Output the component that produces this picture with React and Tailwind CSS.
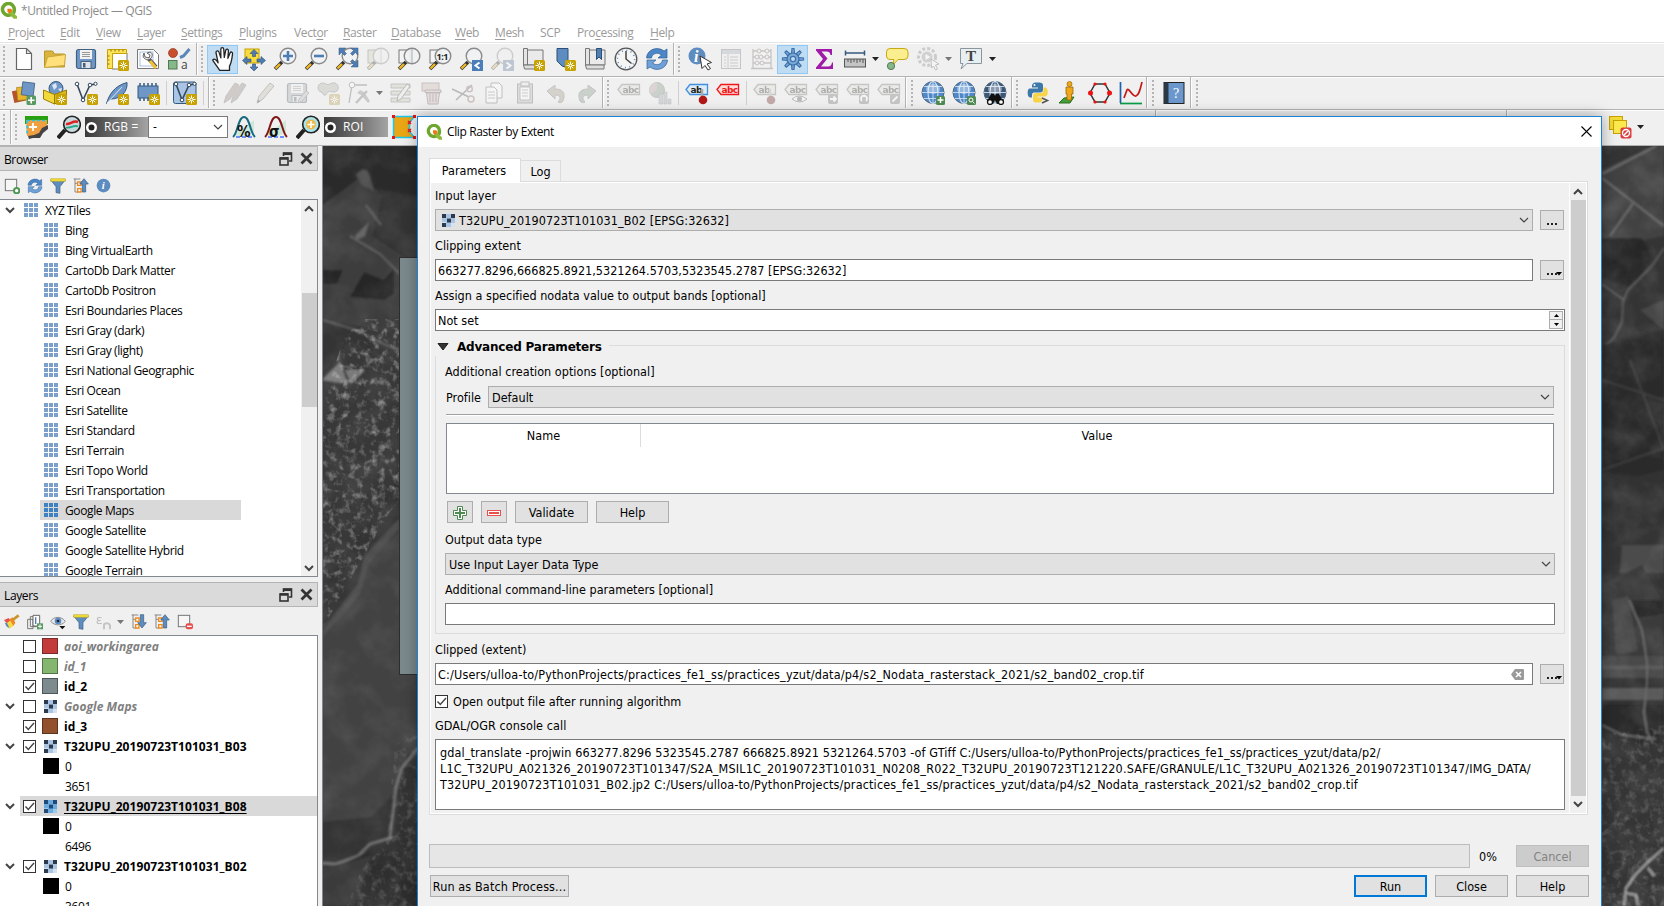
import React from "react";

const UI = "font-['Open_Sans','Noto_Sans',sans-serif] text-[12px] tracking-[-0.38px] [font-stretch:normal]";
const DLG = "font-['DejaVu_Sans_Condensed','DejaVu_Sans',sans-serif] [font-stretch:condensed] text-[12.5px] tracking-[0.02px]";

/* ---------- small building blocks ---------- */
const Svg = ({ s = 24, faded, children, className = "" }) => (
  <svg width={s} height={s} viewBox="0 0 24 24" fill="none" className={`shrink-0 ${faded ? "opacity-35 grayscale-50" : ""} ${className}`}>
    {children}
  </svg>
);
const Cell = ({ children, active }) => (
  <div className={`flex h-[29px] w-[31px] shrink-0 items-center justify-center ${active ? "border border-[#90c8f6] bg-[#c0dcf3]" : ""}`}>{children}</div>
);
const Grip = ({ className = "" }) => (
  <div className={`flex shrink-0 flex-col gap-[2px] ${className}`}>
    {Array.from({ length: 7 }).map((_, i) => (
      <i key={i} className="h-[2px] w-[2px] bg-[#b4b4b4]" />
    ))}
  </div>
);
const Edge = () => <div className="w-[2px] shrink-0 self-stretch border-r border-white bg-[#b2b2b2]" />;
const Sep = ({ className = "" }) => <div className={`h-6 w-px shrink-0 bg-[#cfcfcf] ${className}`} />;
const Drop = ({ dim, className = "" }) => (
  <svg width="11" height="6" viewBox="0 0 11 6" className={`shrink-0 ${className}`}>
    <path d="M2 1h7L5.500 5z" fill={dim ? "#777" : "#222"} />
  </svg>
);

/* ---------- icon parts ---------- */
const Spark = ({ x = 13, y = 13 }) => (
  <g transform={`translate(${x} ${y})`}>
    <rect width="11" height="11" rx="1.500" fill="#c8a200" />
    <path d="M5.500 1.500v8M1.500 5.500h8M2.800 2.800l5.400 5.400M8.200 2.800L2.800 8.200" stroke="#fff" strokeWidth="1" />
    <circle cx="5.500" cy="5.500" r="1.300" fill="#c8a200" stroke="#fff" strokeWidth=".8" />
  </g>
);
const Lens = ({ children, handle = "#f0b820" }) => (
  <>
    <path d="M2 22l7-7" stroke="#333" strokeWidth="3.600" />
    <path d="M2.500 21.500l4.500-4.500" stroke={handle} strokeWidth="2.400" />
    <circle cx="15" cy="9" r="7.800" fill="#f0f2f4" fillOpacity=".9" stroke="#8a8a8a" strokeWidth="1.400" />
    {children}
  </>
);
const QLogo = ({ s = 16 }) => (
  <Svg s={s}>
    <path d="M17.500 17A8.300 8.300 0 1 1 20 12.500" stroke="#6ea62e" strokeWidth="5" transform="translate(0 -.5)" />
    <path d="M20.300 11q0 3-1.500 5" stroke="#6ea62e" strokeWidth="5" />
    <path d="M12 13h4l8 7v3.500h-4.500L12 16z" fill="#8fb93a" />
    <path d="M10.500 9.500h5l2.300 2.800-4.300 4.200-3-3z" fill="#ee7913" />
  </Svg>
);
const PaperNew = () => <Svg><path d="M4.500 1.500h10l5 5v16h-15zM14.500 1.500v5h5" fill="#fff" stroke="#666" strokeWidth="1.200" /></Svg>;
const Folder = () => <Svg><path d="M1.500 20V4h8l2 3h10v13z" fill="#d9b33c" stroke="#b8962a" /><path d="M1.500 20.500L4.500 10l18-2.500-1 11z" fill="#ffe07a" stroke="#c9a63a" /></Svg>;
const Floppy = ({ faded, pen }) => (
  <Svg faded={faded}>
    <rect x="2.500" y="2.500" width="19" height="19" rx="2" fill={faded ? "#aaa" : "#6e97c8"} stroke="#44607f" strokeWidth="1.200" />
    <rect x="6" y="3" width="12" height="9" fill="#f2f2f2" /><path d="M8 5.500h8M8 7.500h8M8 9.500h8" stroke="#999" />
    <rect x="7" y="14.500" width="10" height="7" fill="#e0e4e8" stroke="#44607f" /><rect x="9" y="16" width="2.500" height="4.500" fill="#44607f" />
    {pen && <path d="M13 22l1-4 7-8 3 2-7 8z" fill="#bbb" stroke="#777" />}
  </Svg>
);
const Layout = () => <Svg><path d="M7 3h12l3 3v16H7z" fill="#fff" stroke="#777" /><path d="M2.500 2.500h19v4h-14v15h-5z" fill="#fbe35a" stroke="#c8a200" /><path d="M6 2.500v2M10 2.500v2M14 2.500v2M18 2.500v2M2.500 9h2M2.500 13h2M2.500 17h2" stroke="#8a7000" /><Spark /></Svg>;
const LayoutMgr = () => <Svg><path d="M1.500 2.500h16l5 5v14h-21z" fill="#fff" stroke="#777" /><rect x="4" y="5" width="13" height="14" stroke="#a9bfe0" /><path d="M12 11l8 9" stroke="#555" strokeWidth="4" /><path d="M14 14l6 7" stroke="#f1c232" strokeWidth="3" /><path d="M8 6l1 4 4 1 1-3-3-2 3-1c3 1 3 5 0 7s-6 0-7-3z" fill="#eee" stroke="#666" /></Svg>;
const Style = () => <Svg><circle cx="6" cy="6" r="4.500" fill="#c8502c" stroke="#8f3a20" strokeWidth=".7" /><rect x="1.500" y="13.500" width="8.500" height="8.500" fill="#86b88a" stroke="#4e7a52" /><path d="M13 10.500l3.500-1.500 6-7" stroke="#5b87b8" strokeWidth="3" /><text x="14" y="22" fontSize="12" fill="#444" fontFamily="Open Sans">a</text></Svg>;
const Hand = () => <Svg s={26}><path d="M9 22.500c-2-3-5-7-6.500-9.500 1-1.500 2.800-.8 4 1l1 1.500L5.500 6c0-1.800 2.300-2 2.800-.3L10 11V3c0-2 2.600-2 2.700 0l.5 7.500L14.500 4c.4-1.600 2.600-1.300 2.500.4l-.5 7 2-5c.7-1.500 2.600-.8 2.300.8-.4 3-.8 8-2.800 11.300v4z" fill="#fff" stroke="#222" strokeWidth="1.200" strokeLinejoin="round" /></Svg>;
const PanSel = () => <Svg><rect x="3" y="2" width="14" height="14" fill="#f8dc3c" stroke="#c8a200" /><g fill="#4f7db3" stroke="#2c4f78" strokeWidth=".6"><path d="M12 2.500l4 4h-2.500v3h-3v-3H8zM12 24l-4-4h2.500v-3h3v3H16zM.5 13.500L5 9.500V12h4v3H5v2.500zM23.500 13.500L19 9.500V12h-4v3h4v2.500z" /></g></Svg>;
const ZoomIn = () => <Svg><Lens><path d="M15 4v10M10 9h10" stroke="#4f7db3" strokeWidth="2.600" /></Lens></Svg>;
const ZoomOut = () => <Svg><Lens><path d="M10 9h10" stroke="#4f7db3" strokeWidth="2.600" /></Lens></Svg>;
const ZoomFull = () => <Svg><Lens /><g fill="#4f7db3" stroke="#34597f" strokeWidth=".5"><path d="M4 1h7L8.500 3.500l3 3-2 2-3-3L4 8zM23 1v7l-2.500-2.500-3 3-2-2 3-3L16 1zM23 20h-7l2.500-2.500-3-3 2-2 3 3L23 13z" /></g></Svg>;
const ZoomSel = ({ faded }) => <Svg faded={faded}><rect x="2" y="3" width="11" height="13" fill={faded ? "#d8d4a0" : "#f4f4f4"} stroke="#777" /><Lens><path d="M15 2v14" stroke="#aaa" /></Lens></Svg>;
const ZoomOne = () => <Svg><rect x="2" y="3" width="11" height="13" fill="#f4f4f4" stroke="#777" /><Lens /><text x="8.500" y="12.500" fontSize="9" fontWeight="700" fill="#222" fontFamily="Open Sans" letterSpacing="-.5">1:1</text></Svg>;
const ZoomNav = ({ faded, d }) => <Svg faded={faded}><Lens /><rect x="13" y="13" width="11" height="11" fill="#4a7ebb" /><path d={d} stroke="#fff" strokeWidth="2" /></Svg>;
const Map3 = ({ mark }) => <Svg><path d="M5 3h17v15H5z" fill="#eaeaea" stroke="#777" /><path d="M2.500 1.500h4V18h-4z" fill="#e4e4e4" stroke="#777" /><path d="M2.500 18H21v4H3.500z" fill="#ddd" stroke="#777" />{mark ? <path d="M13.500 1.500h5v11L16 10l-2.500 2.500z" fill="#4f7db3" stroke="#2c4f78" /> : <Spark />}</Svg>;
const Bookmark = () => <Svg><path d="M5 1.500h11V21l-6-2-5-5z" fill="#5d8cc0" stroke="#2c4f78" /><Spark /></Svg>;
const Clock = () => <Svg><circle cx="12" cy="12" r="10.800" fill="#f5f5f5" stroke="#555" strokeWidth="1.300" /><path d="M12 4v8l5.500 4.500" stroke="#444" strokeWidth="1.500" /><circle cx="12" cy="12" r="8.600" stroke="#5d8cc0" strokeDasharray="1 3.500" strokeWidth="1.600" /></Svg>;
const Refresh = ({ s = 24 }) => <Svg s={s}><path d="M1.500 11C2 2 13-1 19 4l3-2v9h-9l3.500-3C12 4.500 7 7 6.500 11z" fill="#4a86c8" stroke="#2f5f95" strokeWidth=".7" /><path d="M22.500 13c-.5 9-11.500 12-17.500 7l-3 2v-9h9l-3.500 3c4.500 3.500 9.500 1 10-3z" fill="#6fa0d8" stroke="#2f5f95" strokeWidth=".7" /></Svg>;
const Identify = () => <Svg><circle cx="9" cy="9" r="8.500" fill="#5d8cc0" /><text x="6" y="14.500" fontSize="16" fontStyle="italic" fontWeight="700" fill="#fff" fontFamily="Liberation Serif">i</text><path d="M12 9l11.500 6.500-4.500 1.500 3.500 4.500-2.500 1.500-3-4.500-3 3z" fill="#fff" stroke="#333" /></Svg>;
const Table = () => <Svg faded><rect x="2.500" y="2.500" width="19" height="19" fill="#eee" stroke="#777" /><path d="M3 5h18" stroke="#9ab0c8" strokeWidth="4" /><path d="M9 7v14M5 10h2M5 13h2M5 16h2M5 19h2M11 10h8M11 13h8M11 16h8M11 19h8" stroke="#888" /></Svg>;
const Abacus = () => <Svg faded><path d="M3 2v20M21 2v20M1 21.500h22M3 4h18M3 10h18M3 16h18" stroke="#777" strokeWidth="1.300" /><g fill="#eee" stroke="#866"><circle cx="9" cy="4" r="2" /><circle cx="17" cy="4" r="2" /><circle cx="7" cy="10" r="2" /><circle cx="11" cy="10" r="2" /><circle cx="17" cy="10" r="2" /><circle cx="7" cy="16" r="2" /><circle cx="12" cy="16" r="2" /></g></Svg>;
const Gear = () => (
  <Svg>
    <g stroke="#3f72aa" strokeWidth="1.200" fill="#7aa9d8">
      {[0, 45, 90, 135, 180, 225, 270, 315].map((a) => <path key={a} transform={`rotate(${a} 12 12)`} d="M10.500 6.500L11 1.500h2l.5 5z" />)}
      <circle cx="12" cy="12" r="6" /><circle cx="12" cy="12" r="2.600" fill="#c0dcf3" />
    </g>
  </Svg>
);
const Sigma = () => <Svg><path d="M4 2h16v6h-1.500c-.5-2.500-1.500-3.500-4-3.500H9.500l6 7-6.500 8h7c2.500 0 3.500-1.500 4-4H21V22H4v-1.500L11 12 4 3.500z" fill="#a01aa8" /></Svg>;
const Ruler = () => <Svg><path d="M2 6h20M2.500 3.500v5M21.500 3.500v5" stroke="#34597f" strokeWidth="1.500" /><rect x="1.500" y="12" width="21" height="8" fill="#c4c4c4" stroke="#555" /><path d="M5 12v3M8 12v4M11 12v3M14 12v4M17 12v3M20 12v4" stroke="#555" /></Svg>;
const Tip = () => <Svg><path d="M5 1.500h14q4 0 4 3.500v4q0 3.500-4 3.500h-6L8 18l1-5.500H5q-3.500 0-3.500-3.500V5Q1.500 1.500 5 1.500z" fill="#faee8e" stroke="#c8a814" /><circle cx="6" cy="19" r="3.600" fill="#86b88a" stroke="#4e7a52" /></Svg>;
const GearRun = () => <Svg faded><circle cx="11" cy="10" r="8.500" stroke="#888" strokeWidth="3" strokeDasharray="3 2" /><circle cx="11" cy="10" r="5.500" fill="#999" /><path d="M9.500 7l5 3-5 3z" fill="#fff" /><path d="M15 12l8 5-3.500 1 2 4-2 1-2-4-2 2z" fill="#fff" stroke="#666" /></Svg>;
const TextT = () => <Svg><path d="M1.500 1.500h21v15H8L2 22l2-5.500H1.500z" fill="#e8eff3" stroke="#8a969c" /><text x="6.800" y="14" fontSize="15.500" fontWeight="700" fill="#444" fontFamily="Liberation Serif">T</text></Svg>;

const Sources = () => <Svg><rect x="1" y="9" width="12" height="12" transform="rotate(-12 7 15)" fill="#b5542a" /><rect x="5" y="6" width="12" height="13" transform="rotate(-5 11 12)" fill="#e9b52c" stroke="#a07a10" strokeWidth=".6" /><rect x="10" y="1.500" width="12" height="13" transform="rotate(7 16 8)" fill="#6e97c8" stroke="#44607f" strokeWidth=".8" /><rect x="14.500" y="14.500" width="9.500" height="9.500" rx="1.500" fill="#5a9a62" /><path d="M19.200 16v6.500M16 19.200h6.500" stroke="#fff" strokeWidth="1.600" /></Svg>;
const Gpkg = () => <Svg><circle cx="13" cy="7.500" r="7" fill="#6e97c8" stroke="#34597f" /><path d="M9 4l4-2 1 4-3 3zM15 8l4-1-1 4z" fill="#dbe7f4" /><path d="M.5 9l11 4.500v9.500L.5 18z" fill="#f3d83a" stroke="#9a7e00" /><path d="M11.500 13.500L23.500 9v8l-12 6z" fill="#dcb81c" stroke="#9a7e00" /><Spark /></Svg>;
const VNew = ({ box }) => <Svg>{box && <rect x=".5" y="1" width="22.500" height="21.500" rx="2" fill="#a9c4e4" stroke="#34597f" />}<path d="M3 3l6 16 7-15 6-1" stroke="#34495e" strokeWidth="1.600" /><g fill="#fff" stroke="#34495e"><circle cx="3" cy="3" r="1.800" /><circle cx="9" cy="19" r="1.800" /><circle cx="16" cy="4" r="1.800" /><circle cx="21.500" cy="2.800" r="1.600" /></g><Spark /></Svg>;
const Feather = () => <Svg><path d="M1.500 22.500C4 14 9 5 22 1.500 23 10 16 18 6 18z" fill="#6e97c8" stroke="#34597f" /><path d="M2 22L17 6" stroke="#dbe7f4" /><Spark /></Svg>;
const Chip = () => <Svg><path d="M4 5V2M8 5V2M12 5V2M16 5V2M20 5V2M4 20v-4M8 20v-4M12 20v-4" stroke="#34597f" strokeWidth="1.500" /><rect x="2" y="5" width="20" height="12" fill="#6e97c8" stroke="#34597f" /><Spark /></Svg>;
const Pencils = () => <Svg faded><path d="M1 22l2-7L12 2l4 2-9 14z" fill="#b08070" stroke="#777" /><path d="M8 22l2-7 9-13 4 2-9 14z" fill="#998877" stroke="#777" /></Svg>;
const Pencil = () => <Svg faded><path d="M3 22l2-7L16 2l4 3L9 18z" fill="#c9c0a8" stroke="#666" /><path d="M3 22l1-3.500 2.500 2z" fill="#333" /></Svg>;
const Blob = () => <Svg faded><path d="M2 7c0-5 5-6 8-4 3 2 5-2 9-1 5 2 4 9-1 9-3 0-4-1-6 0s-1 4-4 3c-2-1-1-3-3-3-2-.5-3-2-3-4z" fill="#b5b5a0" stroke="#777" /><Spark /></Svg>;
const Vertex = () => <Svg faded><path d="M5 4L2 22M5 4h15" stroke="#666" strokeWidth="1.300" /><circle cx="5" cy="4" r="2.800" fill="#fff" stroke="#666" /><path d="M10 12l3-3 4 2 6 9-2 2-7-8z" fill="#888" /><path d="M20 10L9 22" stroke="#777" strokeWidth="2.500" /></Svg>;
const Modify = () => <Svg faded><path d="M2 3h19v4H2zM2 10h19v4H2zM2 17h19v4H2z" fill="#cfc8a8" stroke="#777" /><path d="M8 20l1-5L18 3l3 2-9 13z" fill="#eee" stroke="#555" /></Svg>;
const Trash = () => <Svg faded><rect x="2" y="2" width="17" height="8" fill="#dcb8a8" stroke="#966" /><path d="M5 9h16v2.500H5zM6.500 12h13L18 23H8z" fill="#dcb8b8" stroke="#855" /><path d="M10 13v8M13 13v8M16 13v8" stroke="#855" /></Svg>;
const Cut = () => <Svg faded><path d="M1 8l17 8M5 19L21 4" stroke="#555" strokeWidth="1.600" /><circle cx="20" cy="18" r="3" stroke="#a66" strokeWidth="1.500" /><circle cx="18.500" cy="8" r="2.800" stroke="#a66" strokeWidth="1.500" /></Svg>;
const Copy = () => <Svg faded><path d="M9 2h8l3 3v12H9z" fill="#fff" stroke="#666" /><path d="M4 6h8l3 3v13H4z" fill="#fff" stroke="#666" /><path d="M6 11h7M6 14h7M6 17h7" stroke="#888" /></Svg>;
const Paste = () => <Svg faded><rect x="4.500" y="3" width="15" height="19" fill="#bbb" stroke="#666" /><rect x="8" y="1" width="8" height="4" fill="#eee" stroke="#666" /><path d="M7 6h10v13H7z" fill="#fff" stroke="#777" /><path d="M9 9h6M9 12h6M9 15h6" stroke="#888" /></Svg>;
const Undo = ({ flip }) => <Svg faded className={flip ? "-scale-x-100" : ""}><path d="M3 10l8-6v4c8 0 11 4 8 12-1 2-4 2-5 1 3-3 3-7-3-7v4z" fill={flip ? "#7a9a7a" : "#b09a78"} stroke="#777" /></Svg>;
const Tag = ({ c = "#777", fill = "#e4e2cc", ink, word = "abc", extra, faded }) => (
  <Svg faded={faded}>
    <path d="M1 8.500L5 3.500h17.500v10H5z" fill={fill} stroke={c} strokeWidth="1.300" />
    <text x="5.500" y="11.500" fontSize="9" fontWeight="700" fill={faded ? "#333" : ink || c} fontFamily="DejaVu Sans" letterSpacing="-.6">{word}</text>
    {extra}
  </Svg>
);
const Pin = () => <><path d="M17 8v9" stroke="#aaa" strokeWidth="2.500" /><circle cx="18" cy="19" r="4.300" fill="#b01818" /></>;
const Badge = ({ d }) => <><rect x="13" y="13" width="10" height="10" rx="2" fill="#777" /><path d={d} stroke="#fff" strokeWidth="1.800" /></>;
const Diagram = () => <Svg faded><circle cx="9" cy="9" r="7.500" fill="#7a9a7a" stroke="#777" /><path d="M9 9V1.500A7.500 7.500 0 0 0 2.500 13z" fill="#c99" /><path d="M11 13h4v10h-4zM16 11h3v12h-3zM20 18h3v5h-3z" fill="#9aaabb" stroke="#777" strokeWidth=".6" /></Svg>;
const Globe = ({ extra, dark }) => <Svg><circle cx="12" cy="11.500" r="11" fill={dark ? "#3c5878" : "#4f88c8"} stroke="#56687c" /><ellipse cx="12" cy="11.500" rx="5" ry="11" stroke="#cfe0f2" strokeWidth="1.100" /><path d="M12 .5v22M1 11.500h22M3 5.500h18M3 17.500h18" stroke="#cfe0f2" strokeWidth=".9" /><ellipse cx="12" cy="8" rx="7" ry="5" fill="#fff" fillOpacity=".4" />{extra}</Svg>;
const Python = () => <Svg><path d="M11 1.500c-5 0-5 2-5 5h6v1H3.500C1 7.500 1 16.500 4 16.500h2c0-4 0-5 3-5h5c2 0 3-1 3-3V4c0-2-2-2.500-6-2.500z" fill="#3c78aa" /><path d="M11.500 21.500c5 0 5-2 5-5h-5v-1h8c3 0 3-9 0-9h-2c0 4 0 5.500-3 5.500h-4C8 12 7 13 7 15v3c0 3 1 3.500 4.500 3.500z" fill="#f8d448" /><circle cx="8.500" cy="4" r="1" fill="#fff" /><path d="M16 17l5.500 2.500-5.500 2.500" stroke="#555" strokeWidth="1.500" /></Svg>;
const Pegman = () => <Svg><path d="M2 22l5-5 10-1-4 6z" fill="#46a03a" stroke="#2b6e22" /><circle cx="12.500" cy="3" r="2.500" fill="#f0a818" stroke="#9a6808" strokeWidth=".7" /><path d="M9 6h7v7h-1.500v6H10v-6H9z" fill="#f0a818" stroke="#9a6808" strokeWidth=".8" /></Svg>;
const Hexa = () => <Svg><path d="M2 12l5-9h10l5 9-5 9H7z" stroke="#333" strokeWidth="1.500" /><g fill="#e11"><circle cx="2.500" cy="12" r="2.500" /><circle cx="21.500" cy="12" r="2.500" /><circle cx="7" cy="3" r="1.600" /><circle cx="17" cy="3" r="1.600" /><circle cx="7" cy="21" r="1.600" /><circle cx="17" cy="21" r="1.600" /></g></Svg>;
const Profile = () => <Svg><path d="M1.500 1v21" stroke="#1f5fb0" strokeWidth="1.700" /><path d="M1 22.500h22" stroke="#0a9a46" strokeWidth="1.700" /><path d="M5 17l3-8c2-3 5 7 9 6 3-1 4-6 6-14" stroke="#c41818" strokeWidth="1.700" /></Svg>;
const HelpBook = () => <Svg><rect x="2" y="1.500" width="20" height="21" fill="#6b97cc" stroke="#222" /><rect x="2" y="1.500" width="4.500" height="21" fill="#2b3947" /><text x="11" y="17" fontSize="14" fill="#fff" fontFamily="Liberation Serif">?</text></Svg>;

const ScpClip = () => <Svg><path d="M0 1h23v8H0z" fill="#28a010" /><path d="M1 5h21v6l-5 3-3 5-5 2H2z" fill="#f0a040" /><path d="M23 8v6l-5 4-3 5H8l-4 1-1-3 6-1 5-2 3-5 6-3z" fill="#444" /><path d="M2 5.500h20M2 5.500v15" stroke="#1ec8e8" strokeWidth="1.500" strokeDasharray="3 2" /><path d="M8 8v8M4 12h8" stroke="#fff" strokeWidth="1.800" /></Svg>;
const ScpLens = ({ plus }) => <Svg><path d="M1 23l7-8" stroke="#222" strokeWidth="4" /><circle cx="15" cy="9.500" r="8.300" fill={plus ? "#a8e4ea" : "#c8d8dc"} stroke="#222" strokeWidth="1.600" />{plus ? <><circle cx="15" cy="9.500" r="5" fill="#f0b848" /><path d="M15 6v7M11.500 9.500h7" stroke="#fff" strokeWidth="1.600" /></> : <><path d="M9 9c4 1 7-4 12-2" stroke="#d22" strokeWidth="2.500" /><path d="M9 12.500c4 1 8-3 12-1" stroke="#2a8" strokeWidth="1.800" /></>}</Svg>;
const ScpCurve = ({ c, t }) => <Svg><path d="M2 20l8-6 12-9v12l-10 5z" fill="#cde8d8" /><path d="M4 22h16" stroke="#7090ff" strokeWidth="2" strokeDasharray="4 2" /><path d="M1 22C6 18 6 2 12 2s6 16 11 20" stroke={c} strokeWidth="2" /><text x="5" y="21.500" fontSize="15" fontWeight="700" fill="#111" fontFamily="DejaVu Sans Condensed">{t}</text></Svg>;
const ScpRoi = () => <Svg><path d="M1.500 1.500h21l-5 6v9l5 6h-21z" fill="#eaa614" stroke="#1ec8e8" strokeWidth="1.500" /><path d="M16 6l3 3M19 6l-3 3M16 14l3 3M19 14l-3 3" stroke="#e11" strokeWidth="1.400" /><g fill="#e11"><path d="M0 0h3v3H0zM0 21h3v3H0zM21 0h3v3h-3zM21 21h3v3h-3z" /></g></Svg>;
const Deselect = () => <Svg><rect x="1.500" y="1.500" width="13" height="13" fill="#f2da38" stroke="#c8a200" /><rect x="5.500" y="5.500" width="13" height="13" fill="#fbe94e" stroke="#c8a200" /><rect x="12.500" y="12.500" width="11" height="11" rx="2" fill="#dc3c3c" /><circle cx="18" cy="18" r="3.500" stroke="#fff" strokeWidth="1.400" /><path d="M16 20l4-4" stroke="#fff" strokeWidth="1.400" /></Svg>;

const Grid9 = ({ hot }) => (
  <svg width="14" height="14" viewBox="0 0 14 14" fill={hot ? "#3f82c4" : "#7ba0cc"} className="shrink-0">
    {[0, 5, 10].map((y) => [0, 5, 10].map((x) => <rect key={`${x}-${y}`} x={x} y={y} width="4" height="4" />))}
  </svg>
);
const RasterIcon = ({ hot }) => {
  const a = hot ? "#1f4a78" : "#2c3a50", b = hot ? "#6aaade" : "#aac4e4", c = hot ? "#9cc8ea" : "#d8e2ee";
  return (
    <svg width="13" height="13" viewBox="0 0 13 13" className="shrink-0">
      <rect width="13" height="13" fill={c} />
      <path d="M4 0h5v4H4zM0 4h5v4H0zM9 4h4v5H9zM4 8h5v5H4z" fill={b} />
      <path d="M0 0h4v4H0zM9 0h4v4H9zM5 4.500h4v4H5zM0 9h4v4H0z" fill={a} />
    </svg>
  );
};
const Chev = ({ up, s = 10, w = 2, c = "#444" }) => (
  <svg width={s} height={s} viewBox="0 0 10 10" className={`shrink-0 ${up ? "rotate-180" : ""}`} fill="none"><path d="M1 3l4 4 4-4" stroke={c} strokeWidth={w} /></svg>
);

/* ---------- dock panels ---------- */
const DockTitle = ({ children }) => (
  <div className="flex h-[25px] w-[318px] shrink-0 items-center border border-l-0 border-[#b4b4b4] bg-[#dadada] pl-1 pr-1 text-black">
    <span className="flex-1 pt-[2px]">{children}</span>
    <svg width="14" height="14" viewBox="0 0 14 14" className="mr-[7px]" fill="none"><path d="M4.500 4V1h8v8H10" stroke="#333" strokeWidth="1.600" /><path d="M4 1.800h9" stroke="#333" strokeWidth="2.500" /><rect x="1" y="6" width="8" height="7" stroke="#333" strokeWidth="1.600" /><path d="M1 6.500h8" stroke="#333" strokeWidth="2.500" /></svg>
    <svg width="13" height="13" viewBox="0 0 13 13"><path d="M1.500 1.500l10 10M11.500 1.500l-10 10" stroke="#333" strokeWidth="2.800" /></svg>
  </div>
);
const Funnel = () => <Svg s={16}><path d="M1 3h22l-8 10v10l-6-1v-9z" fill="#5d8cc0" stroke="#44607f" /><path d="M1 1h22v4H1z" fill="#f4dc3c" stroke="#b09a10" strokeWidth=".7" /></Svg>;
const TreeArrow = ({ down }) => <Svg s={16}><path d="M3 1v20h5M3 8h5M1 1.500h10" stroke="#888" strokeWidth="1.500" /><path d="M7 6h5v5H7zM7 16h5v5H7z" fill="#fff" stroke="#f08a1c" strokeWidth="2" /><path d={down ? "M14 1h5v12h4l-6.500 8L10 13h4z" : "M14 21h5V9h4L16.500 1 10 9h4z"} fill="#5d8cc0" stroke="#34597f" /></Svg>;
const SquareDot = ({ red }) => <Svg s={16}><rect x="2" y="2" width="17" height="17" stroke="#777" strokeWidth="1.500" fill="#f6f6f6" />{red ? <><rect x="13" y="14" width="11" height="9" rx="3" fill="#e85050" /><path d="M15 18.500h7" stroke="#fff" strokeWidth="2" /></> : <circle cx="19" cy="19" r="4" fill="#fff" stroke="#4e9a52" strokeWidth="3" />}</Svg>;
const Info = () => <Svg s={15}><circle cx="12" cy="12" r="11" fill="#5d8cc0" /><text x="9" y="18" fontSize="17" fontStyle="italic" fontWeight="700" fill="#fff" fontFamily="Liberation Serif">i</text></Svg>;
const Brush = () => <Svg s={16}><path d="M0 9l7-3 3 4-5 5z" fill="#e85050" /><path d="M2 15l7-5 5 8-6 4z" fill="#f4dc3c" /><path d="M1 13l4 1 3 7-4-2z" fill="#5d8cc0" /><path d="M8 8l6 10 3-5-4-8z" fill="#f08a1c" /><path d="M13 9l9-7" stroke="#c8952c" strokeWidth="4" /></Svg>;
const GroupAdd = () => <Svg s={16}><path d="M1 8h8v14H1zM5 4h9v15H5z" fill="#f4f4f4" stroke="#777" strokeWidth="1.500" /><path d="M9 2h10v16H9z" fill="#fff" stroke="#666" strokeWidth="1.500" /><path d="M13 5v10" stroke="#4f7db3" strokeWidth="2" /><rect x="15" y="14" width="9" height="9" fill="#5a9a62" /><path d="M19.500 15.500v6M16.500 18.500h6" stroke="#fff" strokeWidth="1.500" /></Svg>;
const Eye = () => <Svg s={16}><path d="M1 11C6 3 17 3 23 11c-6 7-16 7-22 0z" fill="#e4eaf0" stroke="#888" strokeWidth="1.400" /><circle cx="12" cy="10.500" r="5" fill="#5d8cc0" /><circle cx="12" cy="10.500" r="2" fill="#222" /><path d="M14 18h9l-4.500 5z" fill="#111" /></Svg>;
const Eps = () => <Svg s={16} faded><text x="0" y="15" fontSize="20" fill="#555" fontFamily="Open Sans">ε</text><path d="M12 23v-6q0-3 4-3t5 3v6" stroke="#777" strokeWidth="3" /></Svg>;

const tiles = ["Bing", "Bing VirtualEarth", "CartoDb Dark Matter", "CartoDb Positron", "Esri Boundaries Places", "Esri Gray (dark)", "Esri Gray (light)", "Esri National Geographic", "Esri Ocean", "Esri Satellite", "Esri Standard", "Esri Terrain", "Esri Topo World", "Esri Transportation", "Google Maps", "Google Satellite", "Google Satellite Hybrid", "Google Terrain"];

const Box = ({ on }) => (
  <div className="flex h-[13px] w-[13px] shrink-0 items-center justify-center border border-[#333] bg-white">
    {on && <svg width="11" height="11" viewBox="0 0 11 11" fill="none"><path d="M1.500 5.500l2.800 3L10 2" stroke="#444" strokeWidth="1.400" /></svg>}
  </div>
);
const layers = [
  { n: "aoi_workingarea", c: "bg-[#c43c39] border-[#7a2a28]" },
  { n: "id_1", c: "bg-[#85b66f] border-[#557546]" },
  { n: "id_2", c: "bg-[#7d8b8f] border-[#4c5659]", on: true },
  { n: "Google Maps", r: true },
  { n: "id_3", c: "bg-[#91522d] border-[#5c341c]", on: true },
  { n: "T32UPU_20190723T101031_B03", r: true, on: true },
  { v: "0" }, { v: "3651", nb: true },
  { n: "T32UPU_20190723T101031_B08", r: true, on: true, sel: true },
  { v: "0" }, { v: "6496", nb: true },
  { n: "T32UPU_20190723T101031_B02", r: true, on: true },
  { v: "0" }, { v: "3601", nb: true },
];
const LayerRow = ({ l }) =>
  l.v ? (
    <div className="flex h-5 shrink-0 items-center pl-[43px] text-black">
      <span className={`mr-[6px] h-4 w-4 ${l.nb ? "" : "bg-black"}`} />
      <span className="pt-px">{l.v}</span>
    </div>
  ) : (
    <div className="flex h-5 shrink-0 items-center">
      <span className="flex w-5 justify-center">{l.r && <Chev />}</span>
      <div className={`flex h-5 flex-1 items-center pl-[3px] ${l.sel ? "bg-[#d9d9d9]" : ""}`}>
        <Box on={l.on} />
        <span className="ml-[6px] flex w-4 justify-center">{l.r ? <RasterIcon hot={l.sel} /> : <i className={`h-4 w-4 border ${l.c}`} />}</span>
        <span className={`ml-[6px] pt-px font-bold tracking-[0.06px] ${l.on ? "text-black" : "italic text-[#808080]"} ${l.sel ? "underline underline-offset-2" : ""}`}>{l.n}</span>
      </div>
    </div>
  );

const Docks = () => (
  <div className="flex h-full w-[322px] shrink-0 flex-col bg-[#f0f0f0]">
    <DockTitle>Browser</DockTitle>
    <div className="flex h-7 shrink-0 items-center gap-[7px] pl-[4px] pt-px"><SquareDot /><Refresh s={16} /><Funnel /><TreeArrow /><Info /></div>
    <div className="flex h-[378px] w-[318px] shrink-0 border border-l-0 border-[#828790] bg-white text-black">
      <div className="flex-1 overflow-hidden">
        <div className="flex h-5 items-center"><span className="flex w-5 justify-center"><Chev /></span><span className="ml-1"><Grid9 /></span><span className="ml-[7px] pt-[2px]">XYZ Tiles</span></div>
        {tiles.map((t) => (
          <div key={t} className={`ml-10 flex h-5 w-[201px] items-center pl-1 ${t === "Google Maps" ? "bg-[#d9d9d9]" : ""}`}>
            <Grid9 hot={t === "Google Maps"} /><span className="ml-[7px] pt-[2px]">{t}</span>
          </div>
        ))}
      </div>
      <div className="flex w-4 shrink-0 flex-col items-center bg-[#f0f0f0] pt-1 pb-[3px]">
        <Chev up /><div className="mt-[79px] h-[114px] w-[15px] bg-[#cdcdcd]" /><div className="flex-1" /><Chev />
      </div>
    </div>
    <div className="h-[5px] shrink-0" />
    <DockTitle>Layers</DockTitle>
    <div className="flex h-7 shrink-0 items-center pl-[4px] pt-px">
      <div className="flex items-center gap-[7px]"><Brush /><GroupAdd /><Eye /><Funnel /><Eps /></div>
      <Drop dim className="ml-[3px] mr-[5px]" />
      <div className="flex items-center gap-[7px]"><TreeArrow down /><TreeArrow /><SquareDot red /></div>
    </div>
    <div className="flex w-[318px] flex-1 flex-col overflow-hidden border border-b-0 border-l-0 border-[#828790] bg-white">
      {layers.map((l, i) => <LayerRow key={i} l={l} />)}
    </div>
  </div>
);

/* ---------- satellite map ---------- */
const MapView = () => (
  <svg width="1342" height="760" viewBox="322 146 1342 760" className="shrink-0">
    <defs>
      <filter id="soft" x="0" y="0" width="100%" height="100%"><feTurbulence type="fractalNoise" baseFrequency="0.035" numOctaves="4" seed="7" /><feColorMatrix values="0 0 0 0 0.5  0 0 0 0 0.5  0 0 0 0 0.5  1.600 0 0 0 -0.62" /></filter>
      <filter id="town" x="0" y="0" width="100%" height="100%"><feTurbulence type="fractalNoise" baseFrequency="0.14" numOctaves="3" seed="3" /><feColorMatrix values="0 0 0 0 0.6  0 0 0 0 0.6  0 0 0 0 0.6  2.400 0 0 0 -1.150" /></filter>
      <filter id="blur"><feGaussianBlur stdDeviation="1.200" /></filter>
      <clipPath id="urb"><path d="M345 335l20-16h52v160l-28 34-38 65-28 50V400z M395 745l22-20v181h-70l15-38 24-24z M1602 735l62-10v181h-62z" /></clipPath>
    </defs>
    <rect x="322" y="146" width="1342" height="760" fill="#343434" />
    <g filter="url(#blur)">
      <path d="M322 146h95v50l-60-10-35 20z" fill="#2c2c2c" />
      <path d="M322 206l40-30 20 20-10 40 45 30v70l-95-15z" fill="#3e3e3e" />
      <path d="M356 175q10-12 14 2l4 14-12-6z" fill="#505050" />
      <path d="M355 236l14-14-4 14-8 4z" fill="#666" />
      <path d="M364 272l20 8 10-12v26l-10 6-34-3zM323 270h20l-6 14h-14z" fill="#282828" />
      <path d="M322 320l34 10 32 16 30 8M366 205l15 20 M350 236l30 18 20 20" stroke="#666" strokeWidth="1.500" fill="none" />
      <path d="M350 340l47 20v120l-75 110V380z" fill="#373737" />
      <path d="M345 370l20 0 -14 14zM322 380l18-18 8 22z" fill="#7a7a7a" />
      <path d="M417 480V750l-10 5-14 40-22 22-49 5V635l38-48 7-25 32-30z" fill="#424242" />
      <path d="M322 630l36-46 6-28 36-38v10l-32 36-8 30-38 44z" fill="#505050" opacity=".8" />
      <path d="M322 863l14 1 22-8 12-12 20-6 6-50 6-20 16-20" stroke="#7a7a7a" strokeWidth="3" fill="none" opacity=".85" />
      <path d="M322 867l16-1 25-12 32-12 8-64 14-19v147h-95z" fill="#2e2e2e" />
      <path d="M322 868l50-12-18 50h-32z" fill="#3a3a3a" />
    </g>
    <g filter="url(#blur)">
      <path d="M1602 170l50-24h12v90l-25 5-37 0z" fill="#434343" />
      <path d="M1602 174l54-28M1602 178l62 48M1634 202l-24 34" stroke="#6c6c6c" strokeWidth="2" fill="none" />
      <path d="M1602 238h40l12 20-20 30-32-10z" fill="#282828" />
      <path d="M1664 248l-12 18-24 24-5 12-1 20-8 16-12 10M1602 284l22 16" stroke="#5c5c5c" strokeWidth="1.800" fill="none" />
      <path d="M1640 310l24-10v30z" fill="#464646" />
      <path d="M1602 345l62-15v150l-62-8z" fill="#2b2b2b" />
      <path d="M1602 380l62 20M1602 470l62-22M1630 360l34 90" stroke="#3c3c3c" strokeWidth="2" fill="none" />
      <path d="M1602 485l62-15v55l-62 10z" fill="#333" />
      <path d="M1622 545h42v28h-44z" fill="#4c4c4c" />
      <path d="M1602 585l40-20 22 40v60h-62z" fill="#3a3a3a" />
      <path d="M1612 600l16-4 10 55-22 4zM1602 656h62v22h-62z" fill="#484848" />
      <path d="M1602 688h62v12h-62zM1602 666h62v3h-62z" fill="#5a5a5a" />
      <path d="M1632 600h32v14l-28 4z" fill="#2c2c2c" />
      <path d="M1602 704h62v40h-20l-42-18z" fill="#292929" />
      <path d="M1629 600l13 30 5 32v20l-3 30 3 20 10 20-4 26M1602 725l20 10 34 4" stroke="#6a6a6a" strokeWidth="1.800" fill="none" />
      <path d="M1602 740l60 4v162h-60z" fill="#363636" />
      <path d="M1664 848l-16 14-12 12-10 14-2 18M1648 868l6 8M1626 893l10 2 2 11" stroke="#9c9c9c" strokeWidth="2.200" fill="none" />
    </g>
    <rect x="322" y="146" width="95" height="760" filter="url(#soft)" opacity=".16" />
    <rect x="1602" y="146" width="62" height="760" filter="url(#soft)" opacity=".22" />
    <g clipPath="url(#urb)">
      <rect x="322" y="146" width="95" height="540" filter="url(#town)" opacity=".55" />
      <rect x="322" y="686" width="95" height="220" filter="url(#town)" opacity=".25" />
      <rect x="1602" y="146" width="62" height="760" filter="url(#town)" opacity=".28" />
    </g>
    <rect x="399.500" y="257.500" width="40" height="417" fill="#7b898d" stroke="#2d2d2d" />
    <path d="M322.500 906V146M322 145.500h1342" stroke="#828790" />
  </svg>
);

/* ---------- dialog ---------- */
const Label = ({ className = "", children }) => <div className={`flex shrink-0 items-center ${className}`}>{children}</div>;
const Combo = ({ className = "", children }) => (
  <div className={`flex h-[22px] shrink-0 items-center border border-[#adadad] bg-[#e1e1e1] pl-[3px] pr-[3px] ${className}`}>
    <div className="flex flex-1 items-center pt-px">{children}</div><Chev w={1.2} />
  </div>
);
const Field = ({ className = "", children }) => <div className={`flex h-[22px] shrink-0 items-center border border-[#7a7a7a] bg-white pl-[2px] pt-px ${className}`}>{children}</div>;
const Dots = ({ menu }) => (
  <div className="ml-[7px] flex h-5 w-6 shrink-0 items-end border border-[#adadad] bg-[#e1e1e1] pb-1 pl-[6px]">
    <span className="flex gap-[2px]">{[0, 1, 2].map((i) => <i key={i} className="h-[2px] w-[2px] bg-[#222]" />)}</span>
    {menu && <svg width="6" height="4" viewBox="0 0 6 4" className="-mb-px -ml-px"><path d="M0 0h6L3 3.500z" fill="#000" /></svg>}
  </div>
);
const Btn = ({ className = "", children }) => <div className={`flex h-[22px] shrink-0 items-center justify-center border pt-px ${className}`}>{children}</div>;
const gray = "border-[#adadad] bg-[#e1e1e1]";

const Dialog = () => (
  <div className={`absolute left-[417px] top-[116px] flex h-[790px] w-[1185px] flex-col border border-b-0 border-[#1883d7] bg-[#f0f0f0] text-black shadow-[0_0_14px_rgba(0,0,0,0.35)] ${DLG}`}>
    <div className="flex h-[30px] shrink-0 items-center bg-white pb-px pl-2 pr-[9px] font-['Open_Sans','Noto_Sans',sans-serif] text-[12px] tracking-[-0.38px] [font-stretch:normal]">
      <QLogo /><span className="ml-[5px] flex-1">Clip Raster by Extent</span>
      <svg width="11" height="11" viewBox="0 0 11 11"><path d="M.5.5l10 10M10.500.5l-10 10" stroke="#000" strokeWidth="1.100" /></svg>
    </div>
    <div className="mt-[11px] flex h-[23px] shrink-0 items-end pl-[11px]">
      <div className="relative -mb-px flex h-6 w-[92px] items-center justify-center border border-b-0 border-[#dcdcdc] bg-white pr-[2px]">Parameters</div>
      <div className="flex h-[21px] w-10 items-center justify-center border border-b-0 border-l-0 border-[#dcdcdc] pt-[2px]">Log</div>
    </div>
    <div className="ml-[11px] flex h-[634px] w-[1159px] shrink-0 border border-[#dcdcdc] bg-white p-px">
      <div className="flex w-[1138px] shrink-0 flex-col bg-[#f0f0f0] pl-1 pr-1">
        <Label className="h-[26px]">Input layer</Label>
        <div className="flex items-center"><Combo className="w-[1098px]"><span className="ml-[3px] mr-1"><RasterIcon /></span><span className="tracking-[0.09px]">T32UPU_20190723T101031_B02 [EPSG:32632]</span></Combo><Dots /></div>
        <Label className="h-7 pt-px">Clipping extent</Label>
        <div className="flex items-center"><Field className="w-[1098px]">663277.8296,666825.8921,5321264.5703,5323545.2787 [EPSG:32632]</Field><Dots menu /></div>
        <Label className="h-7 pt-px">Assign a specified nodata value to output bands [optional]</Label>
        <Field className="w-[1130px] justify-between pr-[1px]">
          Not set
          <span className="-mt-px flex h-[18px] w-[14px] flex-col border border-[#adadad] bg-[#f0f0f0]">
            <span className="flex h-2 items-center justify-center border-b border-[#adadad]"><svg width="5" height="3"><path d="M0 3h5L2.500 0z" /></svg></span>
            <span className="flex h-2 items-center justify-center"><svg width="5" height="3"><path d="M0 0h5L2.500 3z" /></svg></span>
          </span>
        </Field>
        <div className="mt-[14px] flex h-[289px] w-[1130px] shrink-0 flex-col border border-[#dcdcdc] pl-[9px]">
          <div className="-ml-[10px] -mt-2 flex h-[18px] w-[174px] shrink-0 items-center bg-[#f0f0f0] pl-[2px] font-['DejaVu_Sans',sans-serif] text-[12px] font-bold tracking-[-0.2px] [font-stretch:normal]">
            <svg width="12" height="8" viewBox="0 0 12 8" className="mr-2"><path d="M1 .5h10L6 7z" fill="#333" stroke="#222" /></svg>Advanced Parameters
          </div>
          <Label className="mt-[2px] h-7">Additional creation options [optional]</Label>
          <div className="flex items-center pl-px"><span className="w-[42px] pt-px">Profile</span><Combo className="w-[1066px]">Default</Combo></div>
          <div className="ml-px mt-[6px] h-[2px] w-[1108px] shrink-0 border-b border-white bg-[#a0a0a0]" />
          <div className="ml-px mt-[7px] flex h-[71px] w-[1108px] shrink-0 border border-[#828790] bg-white">
            <div className="flex h-[23px] w-[194px] items-center justify-center border-r border-[#dcdcdc]">Name</div>
            <div className="flex h-[23px] flex-1 items-center justify-center">Value</div>
          </div>
          <div className="ml-[2px] mt-[7px] flex gap-2">
            <Btn className={`w-[26px] ${gray}`}><svg width="14" height="14" viewBox="0 0 14 14"><path d="M4.500.5h5v4h4v5h-4v4h-5v-4h-4v-5h4z" fill="#fff" stroke="#4f8a52" /><path d="M7 2v10M2 7h10" stroke="#4f8a52" strokeWidth="2" /></svg></Btn>
            <Btn className={`w-[26px] ${gray}`}><svg width="14" height="6" viewBox="0 0 14 6"><rect x=".5" y=".5" width="13" height="5" fill="#fff" stroke="#e85050" /><path d="M2 3h10" stroke="#e85050" strokeWidth="2" /></svg></Btn>
            <Btn className={`w-[73px] ${gray}`}>Validate</Btn><Btn className={`w-[73px] ${gray}`}>Help</Btn>
          </div>
          <Label className="h-[30px] pt-1">Output data type</Label>
          <Combo className="w-[1110px]"><span className="tracking-[0.05px]">Use Input Layer Data Type</span></Combo>
          <Label className="h-7 pt-[2px]">Additional command-line parameters [optional]</Label>
          <Field className="w-[1110px]" />
        </div>
        <Label className="h-[29px] pt-[2px]">Clipped (extent)</Label>
        <div className="flex items-center">
          <Field className="w-[1098px] justify-between pr-2"><span className="tracking-[0.18px]">C:/Users/ulloa-to/PythonProjects/practices_fe1_ss/practices_yzut/data/p4/s2_Nodata_rasterstack_2021/s2_band02_crop.tif</span>
            <svg width="13" height="11" viewBox="0 0 13 11"><path d="M4 0h8q1 0 1 1v9q0 1-1 1H4L0 5.500z" fill="#9a9a9a" /><path d="M5 3l5 5M10 3L5 8" stroke="#fff" strokeWidth="1.500" /></svg>
          </Field><Dots menu />
        </div>
        <div className="flex h-8 shrink-0 items-center gap-[5px]"><Box on /><span className="pt-px tracking-[0.05px]">Open output file after running algorithm</span></div>
        <Label className="mb-1 h-[18px] tracking-[0.08px]">GDAL/OGR console call</Label>
        <div className="h-[71px] w-[1130px] shrink-0 whitespace-nowrap border border-[#7a7a7a] bg-white pl-1 pt-[5px] leading-4">
          <p className="tracking-[0.12px]">gdal_translate -projwin 663277.8296 5323545.2787 666825.8921 5321264.5703 -of GTiff C:/Users/ulloa-to/PythonProjects/practices_fe1_ss/practices_yzut/data/p2/</p>
          <p className="tracking-[0.18px]">L1C_T32UPU_A021326_20190723T101347/S2A_MSIL1C_20190723T101031_N0208_R022_T32UPU_20190723T121220.SAFE/GRANULE/L1C_T32UPU_A021326_20190723T101347/IMG_DATA/</p>
          <p className="tracking-[0.16px]">T32UPU_20190723T101031_B02.jp2 C:/Users/ulloa-to/PythonProjects/practices_fe1_ss/practices_yzut/data/p4/s2_Nodata_rasterstack_2021/s2_band02_crop.tif</p>
        </div>
      </div>
      <div className="ml-px flex w-4 shrink-0 flex-col items-center bg-[#f0f0f0] pb-1 pt-1">
        <Chev up /><div className="my-[3px] w-[15px] flex-1 bg-[#cdcdcd]" /><Chev />
      </div>
    </div>
    <div className="mt-[29px] flex h-6 shrink-0 items-center pl-[11px]">
      <div className="h-6 w-[1041px] border border-[#bcbcbc] bg-[#e6e6e6]" />
      <span className="w-[46px] pl-[9px] pt-px">0%</span>
      <Btn className="w-[73px] border-[#bfbfbf] bg-[#cccccc] text-[#838383]">Cancel</Btn>
    </div>
    <div className="mt-[7px] flex shrink-0 gap-2 pl-3">
      <Btn className={`w-[139px] tracking-[0.12px] ${gray}`}>Run as Batch Process...</Btn>
      <div className="w-[769px]" />
      <Btn className="w-[73px] border-2 border-[#0078d7] bg-[#e1e1e1]">Run</Btn>
      <Btn className={`w-[73px] ${gray}`}>Close</Btn>
      <Btn className={`w-[73px] ${gray}`}>Help</Btn>
    </div>
  </div>
);

/* ---------- main window ---------- */
const menus = [["", "P", "roject", 52], ["", "E", "dit", 36], ["", "V", "iew", 41], ["", "L", "ayer", 44], ["", "S", "ettings", 58], ["", "P", "lugins", 55], ["Vect", "o", "r", 49], ["", "R", "aster", 48], ["", "D", "atabase", 64], ["", "W", "eb", 40], ["", "M", "esh", 45], ["SCP", "", "", 37], ["Pro", "c", "essing", 73], ["", "H", "elp", 40]];

const Bar = ({ className = "h-[34px]", children }) => (
  <div className={`flex shrink-0 items-center border-b border-[#b2b2b2] bg-[#f0f0f0] shadow-[inset_0_1px_0_#fff] ${className}`}>{children}</div>
);
const Dark = ({ w, children }) => (
  <div className={`flex h-5 shrink-0 items-center bg-linear-to-r from-[#3a3a3a] to-[#a4a4a4] pl-[1px] text-[12px] tracking-[0.1px] text-white ${w}`}>
    <svg width="11" height="11" viewBox="0 0 11 11" className="mr-[7px]"><circle cx="5.500" cy="5.500" r="5.500" fill="#fff" /><circle cx="5.500" cy="5.500" r="3" fill="#222" /></svg>{children}
  </div>
);

export default function App() {
  return (
    <div className={`relative flex h-[906px] w-[1664px] flex-col overflow-hidden bg-white leading-4 ${UI}`}>
      <div className="flex h-[22px] shrink-0 items-center gap-1 pb-px text-[#8c8c8c]"><QLogo s={17} /><span className="pt-px">*Untitled Project — QGIS</span></div>
      <div className="flex h-5 shrink-0 items-center pl-2 text-[#9a9a9a]">
        {menus.map(([a, b, c, w], i) => <span key={i} className="shrink-0 pt-[2px]" style={{ width: w }}>{a}<u className="underline-offset-2">{b}</u>{c}</span>)}
      </div>
      <Bar className="h-[35px] border-t border-t-[#e4e4e4] pb-px">
        <Grip className="ml-[3px] mr-[3px]" />
        <Cell><PaperNew /></Cell><Cell><Folder /></Cell><Cell><Floppy /></Cell><Cell><Layout /></Cell><Cell><LayoutMgr /></Cell><Cell><Style /></Cell>
        <div className="w-[2px]" /><Edge /><Grip className="ml-[3px] mr-1" />
        <Cell active><Hand /></Cell><Cell><PanSel /></Cell><Cell><ZoomIn /></Cell><Cell><ZoomOut /></Cell><Cell><ZoomFull /></Cell><Cell><ZoomSel faded /></Cell><Cell><ZoomSel /></Cell><Cell><ZoomOne /></Cell>
        <Cell><ZoomNav d="M20.500 15.500l-4 3 4 3" /></Cell><Cell><ZoomNav faded d="M16.500 15.500l4 3-4 3" /></Cell><Cell><Map3 /></Cell><Cell><Bookmark /></Cell><Cell><Map3 mark /></Cell><Cell><Clock /></Cell><Cell><Refresh /></Cell>
        <div className="w-px" /><Edge /><Grip className="ml-[3px] mr-1" />
        <Cell><Identify /></Cell><Cell><Table /></Cell><Cell><Abacus /></Cell><Cell active><Gear /></Cell><Cell><Sigma /></Cell><Cell><Ruler /></Cell><Drop />
        <Cell><Tip /></Cell><Cell><GearRun /></Cell><Drop dim /><div className="w-px" /><Cell><TextT /></Cell><Drop className="ml-px" />
      </Bar>
      <Bar className="h-[33px] pb-px">
        <Grip className="ml-[3px] mr-[3px]" />
        <Cell><Sources /></Cell><Cell><Gpkg /></Cell><Cell><VNew /></Cell><Cell><Feather /></Cell><Cell><Chip /></Cell><Sep className="ml-[3px] mr-[2px]" /><Cell><VNew box /></Cell><Sep className="ml-[3px] mr-1" />
        <Edge /><Grip className="ml-[3px] mr-1" />
        <Cell><Pencils /></Cell><Cell><Pencil /></Cell><Cell><Floppy faded pen /></Cell><Cell><Blob /></Cell><Cell><Vertex /></Cell><Drop dim /><Cell><Modify /></Cell><Cell><Trash /></Cell><Cell><Cut /></Cell><Cell><Copy /></Cell><Cell><Paste /></Cell><Cell><Undo /></Cell><Cell><Undo flip /></Cell>
        <Edge /><Grip className="ml-[3px] mr-1" />
        <Cell><Tag faded /></Cell><Cell><Diagram /></Cell><Sep className="ml-[3px] mr-[2px]" />
        <Cell><Tag c="#3f8fe0" ink="#222" fill="#dcebf8" word="ab" extra={<Pin />} /></Cell><Cell><Tag c="#f01818" fill="#fdd" /></Cell><Sep className="ml-[3px] mr-[2px]" />
        <Cell><Tag faded word="ab" extra={<Pin />} /></Cell><Cell><Tag faded extra={<><path d="M8 18q7-6 15 0-7 6-15 0z" fill="#fff" stroke="#555" /><circle cx="15.500" cy="18" r="2.500" fill="#555" /></>} /></Cell>
        <Cell><Tag faded extra={<Badge d="M15 18h6M18.500 15.500l2.500 2.500-2.500 2.500" />} /></Cell><Cell><Tag faded extra={<Badge d="M16 20a3 3 0 1 1 4 0" />} /></Cell><Cell><Tag faded extra={<Badge d="M15.500 20.500l5-5" />} /></Cell>
        <div className="w-px" /><Edge /><Grip className="ml-1 mr-1" />
        <Cell><Globe extra={<><rect x="15" y="15" width="9" height="9" rx="1.500" fill="#4e8a52" /><path d="M19.500 16v6M16.500 19h6" stroke="#fff" strokeWidth="1.500" /></>} /></Cell>
        <Cell><Globe extra={<><rect x="15" y="15" width="9" height="9" rx="1.500" fill="#4e8a52" /><circle cx="19" cy="19" r="2" stroke="#fff" /><path d="M20.500 20.500l2 2" stroke="#fff" /></>} /></Cell>
        <Cell><Globe dark extra={<><path d="M4 20l4-7h3l1 2 1-2h3l4 7-2 3h-4l-2-4-2 4H6z" fill="#111" /><circle cx="7" cy="21" r="2.500" fill="#fff" stroke="#111" strokeWidth="1.300" /><circle cx="18" cy="21" r="2.500" fill="#fff" stroke="#111" strokeWidth="1.300" /></>} /></Cell>
        <div className="w-px" /><Edge /><Grip className="ml-[3px] mr-1" />
        <Cell><Python /></Cell><Cell><Pegman /></Cell><Cell><Hexa /></Cell><Cell><Profile /></Cell>
        <Edge /><Grip className="ml-1 mr-1" />
        <Cell><HelpBook /></Cell><div className="w-px" /><Edge /><Grip className="ml-1" />
      </Bar>
      <Bar className="h-9 pb-px">
        <Grip className="ml-[3px] mr-[5px]" /><Edge /><Grip className="ml-[3px] mr-1" />
        <Cell><ScpClip /></Cell><div className="ml-px mr-px"><Cell><ScpLens /></Cell></div>
        <Dark w="w-[63px]">RGB =</Dark>
        <div className="flex h-[22px] w-20 shrink-0 items-center justify-between border border-[#7a7a7a] bg-white px-1 text-black">-<Chev w={1.2} /></div>
        <Cell><ScpCurve c="#186a80" t="%" /></Cell><div className="w-px" /><Cell><ScpCurve c="#801818" t="σ" /></Cell><div className="w-px" /><Cell><ScpLens plus /></Cell>
        <div className="w-px" /><Dark w="w-16">ROI</Dark><Cell><ScpRoi /></Cell>
        <div className="w-[736px]" /><Edge /><div className="w-[349px]" /><Edge /><div className="w-[96px]" />
        <Cell><Deselect /></Cell><Drop />
      </Bar>
      <div className="flex min-h-0 flex-1"><Docks /><MapView /></div>
      <Dialog />
    </div>
  );
}
